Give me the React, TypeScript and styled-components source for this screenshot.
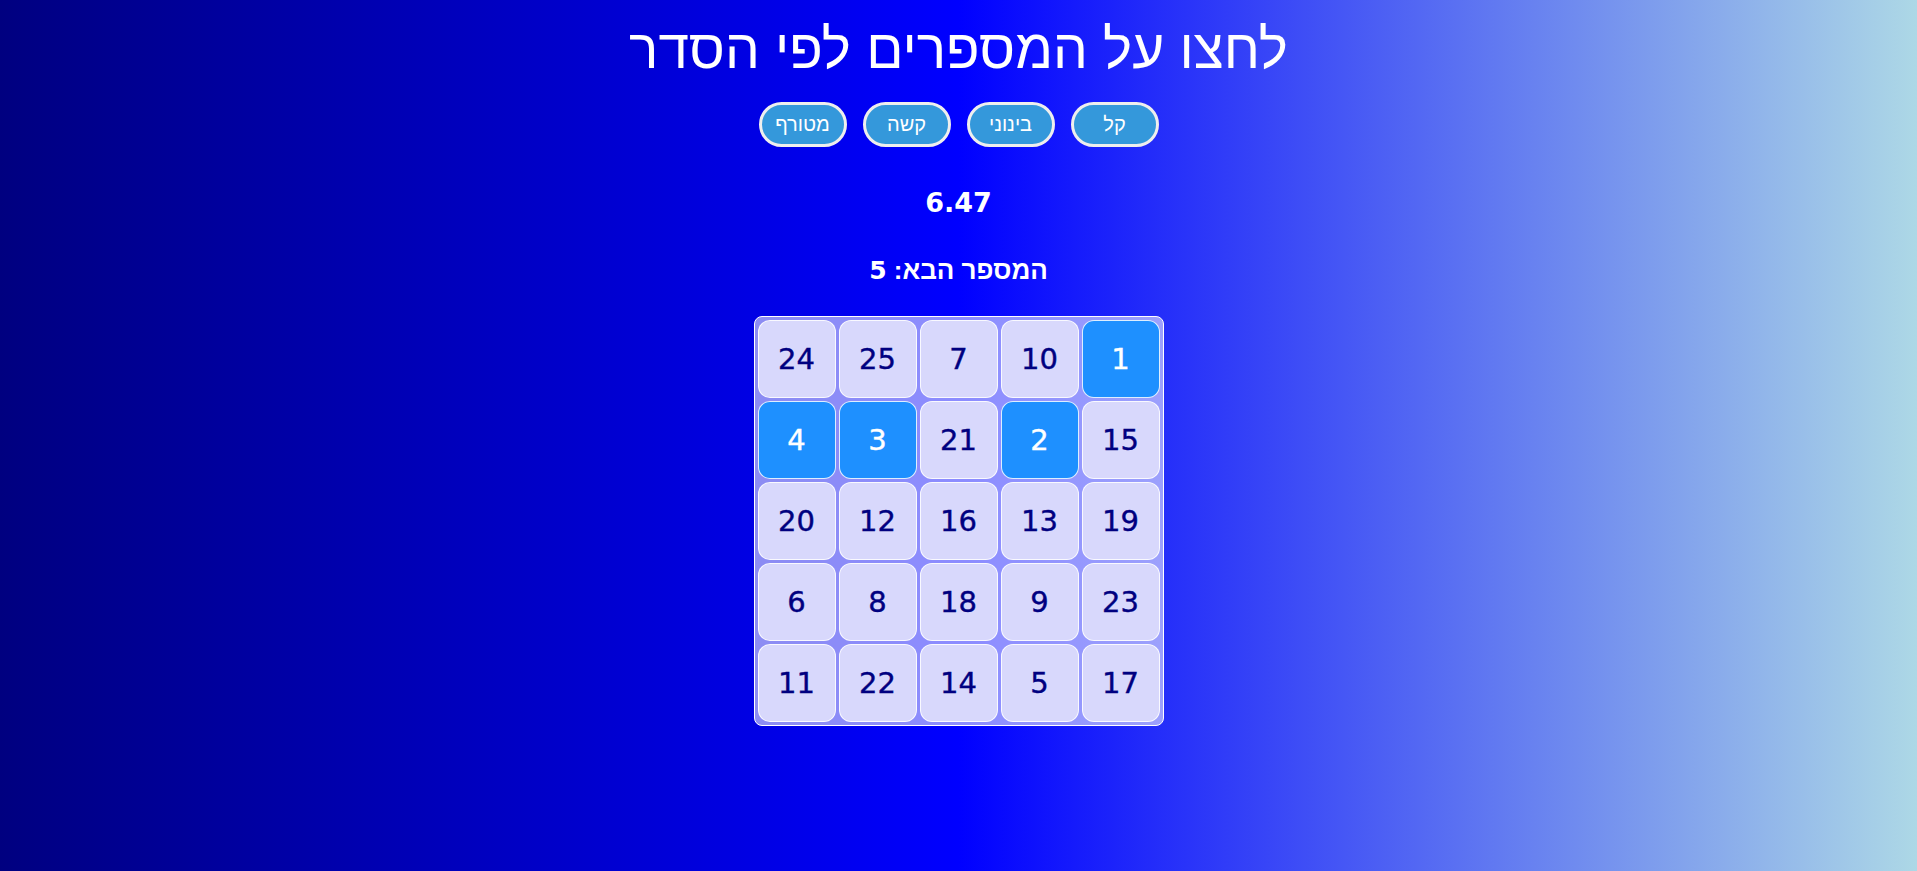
import React from "react";
import styled, { createGlobalStyle } from "styled-components";

const GlobalStyle = createGlobalStyle`
  html, body {
    margin: 0;
    padding: 0;
  }
  body {
    min-height: 100vh;
    background: linear-gradient(to right, #000080, #0000ff 50%, #add8e6);
    font-family: "Liberation Sans", "Open Sans", sans-serif;
    color: #ffffff;
  }
`;

const Page = styled.div`
  direction: rtl;
  display: flex;
  flex-direction: column;
  align-items: center;
  min-height: 871px;
`;

const Title = styled.h1`
  margin: 17px 0 0;
  font-family: "Liberation Sans", "Open Sans", sans-serif;
  font-size: 55px;
  font-weight: 400;
  line-height: 64px;
  color: #ffffff;
`;

const ButtonRow = styled.div`
  display: flex;
  gap: 16px;
  margin-top: 21px;
`;

const LevelButton = styled.button`
  box-sizing: border-box;
  width: 88px;
  height: 45px;
  border: 3px solid #eeeeee;
  border-radius: 23px;
  background: #3498db;
  color: #ffffff;
  font-family: "Liberation Sans", sans-serif;
  font-size: 20px;
  padding: 0;
  cursor: pointer;
`;

const Timer = styled.div`
  margin-top: 38px;
  font-family: "DejaVu Sans", sans-serif;
  font-size: 27px;
  font-weight: 700;
  line-height: 36px;
`;

const NextNumber = styled.div`
  margin-top: 32px;
  font-family: "Liberation Sans", sans-serif;
  font-size: 26px;
  font-weight: 700;
  line-height: 34px;
`;

const NextValue = styled.span`
  font-family: "DejaVu Sans", sans-serif;
  font-size: 25px;
`;

const Board = styled.div`
  direction: ltr;
  margin-top: 28px;
  display: grid;
  grid-template-columns: repeat(5, 78px);
  grid-auto-rows: 78px;
  gap: 3px;
  padding: 3px;
  border: 1px solid #ffffff;
  border-radius: 8px;
  background: rgba(255, 255, 255, 0.55);
`;

const Cell = styled.div<{ $done: boolean }>`
  box-sizing: border-box;
  display: flex;
  align-items: center;
  justify-content: center;
  border: 1px solid rgba(255, 255, 255, 0.85);
  border-radius: 12px;
  background: ${(p) => (p.$done ? "#1e90ff" : "#d8d8fc")};
  color: ${(p) => (p.$done ? "#ffffff" : "#000080")};
  font-family: "DejaVu Sans", sans-serif;
  font-size: 29px;
  font-weight: 400;
  -webkit-text-stroke: 0.4px currentColor;
  cursor: pointer;
`;

const numbers = [
  24, 25, 7, 10, 1,
  4, 3, 21, 2, 15,
  20, 12, 16, 13, 19,
  6, 8, 18, 9, 23,
  11, 22, 14, 5, 17,
];

const next = 5;

export default function App() {
  return (
    <>
      <GlobalStyle />
      <Page>
        <Title>לחצו על המספרים לפי הסדר</Title>
        <ButtonRow>
          <LevelButton>קל</LevelButton>
          <LevelButton>בינוני</LevelButton>
          <LevelButton>קשה</LevelButton>
          <LevelButton>מטורף</LevelButton>
        </ButtonRow>
        <Timer>6.47</Timer>
        <NextNumber>
          המספר הבא: <NextValue>{next}</NextValue>
        </NextNumber>
        <Board>
          {numbers.map((n) => (
            <Cell key={n} $done={n < next}>
              {n}
            </Cell>
          ))}
        </Board>
      </Page>
    </>
  );
}
